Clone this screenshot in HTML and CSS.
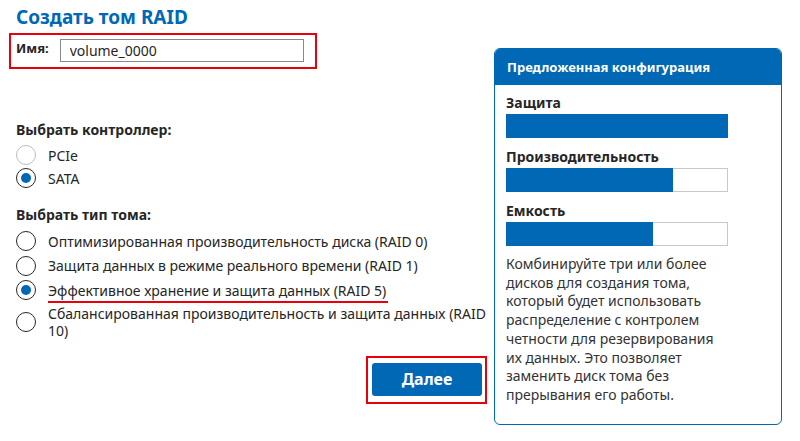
FILE: index.html
```html
<!DOCTYPE html>
<html lang="ru">
  <head>
    <meta charset="UTF-8" />
    <meta name="viewport" content="width=device-width, initial-scale=1.0" />
    <title>Создать том RAID</title>
    <link rel="stylesheet" href="styles.css">
  </head>
  <body>
    <div class="page">
      <div class="main">
        <h1>Создать том RAID</h1>
        <div class="name-box">
          <label for="name">Имя:</label>
          <input type="text" id="name" value="volume_0000" />
        </div>

        <p class="section-title first">Выбрать контроллер:</p>
        <div class="options tight">
          <div class="option"><span class="radio disabled"></span><span>PCIe</span></div>
          <div class="option"><span class="radio checked"></span><span>SATA</span></div>
        </div>

        <p class="section-title">Выбрать тип тома:</p>
        <div class="options">
          <div class="option"><span class="radio"></span><span>Оптимизированная производительность диска (RAID 0)</span></div>
          <div class="option"><span class="radio"></span><span>Защита данных в режиме реального времени (RAID 1)</span></div>
          <div class="option"><span class="radio checked"></span><span class="marked">Эффективное хранение и защита данных (RAID 5)</span></div>
          <div class="option"><span class="radio"></span><span>Сбалансированная производительность и защита данных (RAID 10)</span></div>
        </div>

        <div class="actions">
          <div class="button-box">
            <button type="button">Далее</button>
          </div>
        </div>
      </div>

      <div class="panel">
        <div class="panel-head">Предложенная конфигурация</div>
        <div class="panel-body">
          <p class="meter-label">Защита</p>
          <div class="meter"><div class="fill" style="width: 100%"></div></div>
          <p class="meter-label">Производительность</p>
          <div class="meter"><div class="fill" style="width: 75%"></div></div>
          <p class="meter-label">Емкость</p>
          <div class="meter"><div class="fill" style="width: 66%"></div></div>
          <p class="desc">
            Комбинируйте три или более дисков для создания тома, который будет
            использовать распределение с контролем четности для резервирования
            их данных. Это позволяет заменить диск тома без прерывания его работы.
          </p>
        </div>
      </div>
    </div>
  </body>
</html>
```

FILE: styles.css
```css
* {
  margin: 0;
  padding: 0;
  box-sizing: border-box;
}
body {
  font-family: "Noto Sans", "Open Sans", sans-serif;
  font-size: 14px;
  color: #262626;
  background: #fff;
}

.page {
  display: flex;
  padding: 0 18px 0 9px;
  gap: 7px;
}

.main {
  width: 478px;
}

h1 {
  font-size: 19px;
  line-height: 26px;
  color: #0068b5;
  margin: 4px 0 0 7px;
}

.name-box {
  width: 308px;
  height: 36px;
  margin-top: 3px;
  border: 2px solid #e8000b;
  display: flex;
  align-items: center;
  padding: 0 11px 0 5px;
  gap: 11px;
}
.name-box label {
  font-weight: bold;
  font-size: 13px;
  margin-top: -6px;
}
.name-box input {
  flex: 1;
  height: 23px;
  border: 1px solid #8a8a8a;
  padding: 0 9px;
  font-family: inherit;
  font-size: 14px;
  color: #262626;
  margin-top: -1px;
}

.section-title {
  font-weight: bold;
  line-height: 20px;
  margin: 17px 0 6px 7px;
}
.section-title.first {
  margin-top: 51px;
  margin-bottom: 5px;
}

.options {
  display: flex;
  flex-direction: column;
  gap: 4.5px;
  margin-left: 7px;
}
.options.tight {
  gap: 3px;
}

.option {
  display: flex;
  align-items: center;
  gap: 12px;
  line-height: 17px;
  min-height: 20px;
}

.radio {
  flex: none;
  width: 20px;
  height: 20px;
  border-radius: 50%;
  border: 1.5px solid #262626;
  display: flex;
  align-items: center;
  justify-content: center;
}
.radio.disabled {
  border-color: #bdbdbd;
}
.radio.checked::after {
  content: "";
  width: 10px;
  height: 10px;
  border-radius: 50%;
  background: #0068b5;
}

.marked {
  border-bottom: 2px solid #e8000b;
  padding: 0 2px 2px 0;
  margin-bottom: -4px;
}

.actions {
  display: flex;
  justify-content: flex-end;
  margin-top: 17px;
}
.button-box {
  border: 2px solid #e8000b;
  padding: 5px 3px 6px 4px;
}
button {
  display: block;
  width: 110px;
  height: 33px;
  background: #0068b5;
  color: #fff;
  border: none;
  border-radius: 3px;
  font-family: inherit;
  font-size: 16px;
  font-weight: bold;
}

.panel {
  width: 288px;
  margin-top: 48px;
  border: 1px solid #0068b5;
  border-radius: 6px;
  overflow: hidden;
  height: 377px;
}
.panel-head {
  background: #0068b5;
  color: #fff;
  font-size: 13px;
  font-weight: bold;
  height: 36px;
  line-height: 36px;
  padding-left: 12px;
}
.panel-body {
  padding: 8px 53px 0 11px;
}
.meter-label {
  font-weight: bold;
  line-height: 20px;
  margin-bottom: 1px;
}
.meter {
  height: 24px;
  box-shadow: inset 0 0 0 1px #c8c8c8;
  margin-bottom: 9px;
  background: #fff;
}
.meter .fill {
  background: #0068b5;
  height: 24px;
}
.desc {
  margin-top: 5px;
  line-height: 18.7px;
  color: #333;
}
```
